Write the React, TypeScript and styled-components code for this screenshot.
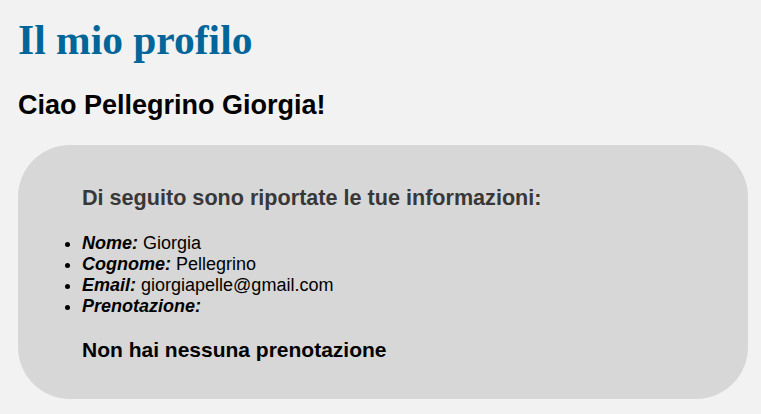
import React from 'react';
import styled, { createGlobalStyle } from 'styled-components';

const GlobalStyle = createGlobalStyle`
  html, body {
    margin: 0;
    padding: 0;
    background: #f2f2f2;
  }
  body {
    font-family: 'Liberation Sans', Arial, sans-serif;
    font-size: 18px;
    color: #000;
  }
`;

const Page = styled.div`
  padding: 16px 13px 0 18px;
`;

const Title = styled.h1`
  margin: 0 0 26px;
  font-family: 'Liberation Serif', 'Times New Roman', serif;
  font-size: 41.5px;
  font-weight: bold;
  color: #006699;
`;

const Greeting = styled.h2`
  margin: 0 0 24px;
  font-size: 27px;
  font-weight: bold;
`;

const Card = styled.section`
  background: #d7d7d7;
  border-radius: 52px;
  padding: 40px 64px 37px;
`;

const CardHeading = styled.h3<{ muted?: boolean }>`
  margin: 0;
  font-size: ${p => (p.muted ? '21.6px' : '21px')};
  font-weight: bold;
  color: ${p => (p.muted ? '#383838' : '#000')};
`;

const InfoList = styled.ul`
  margin: 21.5px 0 21px;
  padding: 0;
`;

const InfoItem = styled.li`
  font-size: 18px;
`;

const Label = styled.b`
  font-style: italic;
`;

const info = [
  { label: 'Nome:', value: 'Giorgia' },
  { label: 'Cognome:', value: 'Pellegrino' },
  { label: 'Email:', value: 'giorgiapelle@gmail.com' },
  { label: 'Prenotazione:', value: '' }
];

export default function App() {
  return (
    <>
      <GlobalStyle />
      <Page>
        <Title>Il mio profilo</Title>
        <Greeting>Ciao Pellegrino Giorgia!</Greeting>
        <Card>
          <CardHeading muted>Di seguito sono riportate le tue informazioni:</CardHeading>
          <InfoList>
            {info.map(x => (
              <InfoItem key={x.label}>
                <Label>{x.label}</Label>
                {x.value && ' ' + x.value}
              </InfoItem>
            ))}
          </InfoList>
          <CardHeading>Non hai nessuna prenotazione</CardHeading>
        </Card>
      </Page>
    </>
  );
}
